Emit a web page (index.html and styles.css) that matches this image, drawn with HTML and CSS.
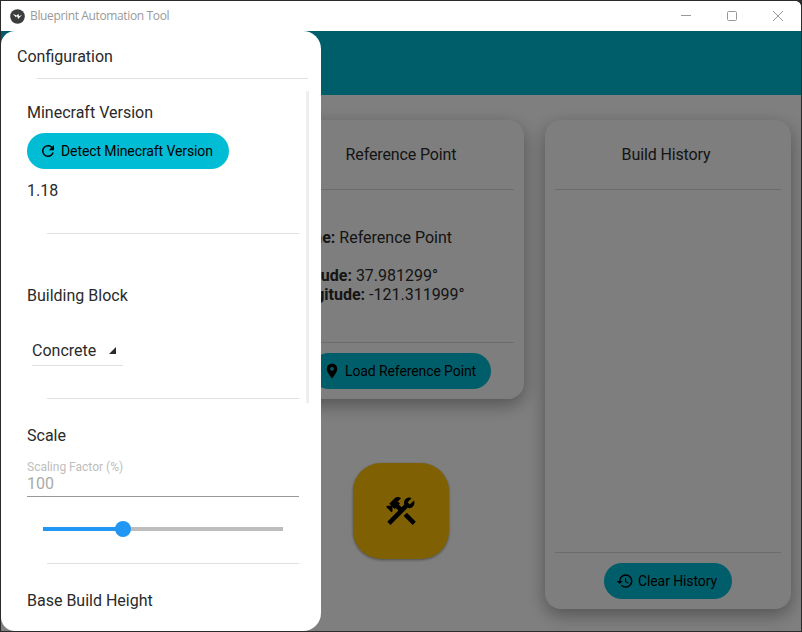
FILE: index.html
```html
<!DOCTYPE html>
<html lang="en">
<head>
<meta charset="utf-8">
<title>Blueprint Automation Tool</title>
<link rel="stylesheet" href="styles.css">
</head>
<body>
<div class="window">
  <header class="titlebar">
    <svg class="app-logo" viewBox="0 0 16 16"><circle cx="8" cy="8" r="7.8" fill="#3c3c3c"/><path d="M3 5L6.2 8.8L7.6 7.4L8.6 10.6L13 6.2L9.6 7.6L9 5L7.2 6.8Z" fill="#fff"/></svg>
    <span class="app-title">Blueprint Automation Tool</span>
    <div class="win-controls">
      <span class="win-btn"><svg viewBox="0 0 12 12"><path d="M1 5.5H11" stroke="#999" fill="none"/></svg></span>
      <span class="win-btn"><svg viewBox="0 0 12 12"><rect x="1.5" y="1.5" width="9" height="9" rx="1" stroke="#999" fill="none"/></svg></span>
      <span class="win-btn"><svg viewBox="0 0 12 12"><path d="M1 1L11 11M11 1L1 11" stroke="#999" fill="none"/></svg></span>
    </div>
  </header>
  <div class="app">
    <div class="toolbar"></div>
    <main class="columns">
      <section class="card tall"></section>
      <div class="middle">
        <section class="card">
          <h2 class="card-title">Reference Point</h2>
          <div class="card-body">
            <p class="info"><b>Name:</b> Reference Point</p>
            <p class="info gap"><b>Latitude:</b> 37.981299°<br><b>Longitude:</b> -121.311999°</p>
          </div>
          <div class="card-foot">
            <button class="pill load">
              <svg class="icon" viewBox="0 0 24 24"><path d="M12,11.5A2.5,2.5 0 0,1 9.5,9A2.5,2.5 0 0,1 12,6.5A2.5,2.5 0 0,1 14.5,9A2.5,2.5 0 0,1 12,11.5M12,2A7,7 0 0,0 5,9C5,14.25 12,22 12,22C12,22 19,14.25 19,9A7,7 0 0,0 12,2Z"/></svg>
              Load Reference Point
            </button>
          </div>
        </section>
        <button class="fab">
          <svg class="fab-icon" viewBox="0 0 24 24"><path d="M13.78 15.3L19.78 21.3L21.89 19.14L15.89 13.14L13.78 15.3M17.5 10.1C17.11 10.1 16.69 10.05 16.36 9.91L4.97 21.25L2.86 19.14L10.27 11.74L8.5 9.96L7.78 10.66L6.33 9.25V12.11L5.63 12.81L2.11 9.25L2.81 8.55H5.58L4.17 7.14L7.78 3.53C8.95 2.36 10.83 2.36 12 3.53L9.89 5.66L11.3 7.06L10.59 7.77L12.38 9.55L14.2 7.66C14.06 7.33 14 6.91 14 6.55C14 4.63 15.56 3.07 17.5 3.07C18.09 3.07 18.61 3.2 19.08 3.47L16.41 6.14L17.91 7.64L20.58 4.97C20.85 5.44 20.97 5.95 20.97 6.55C20.97 8.47 19.42 10.1 17.5 10.1Z"/></svg>
        </button>
      </div>
      <section class="card tall">
        <h2 class="card-title history">Build History</h2>
        <div class="card-body"></div>
        <div class="card-foot">
          <button class="pill">
            <svg class="icon" viewBox="0 0 24 24"><path d="M13.5,8H12V13L16.28,15.54L17,14.33L13.5,12.25V8M13,3A9,9 0 0,0 4,12H1L4.96,16.03L9,12H6A7,7 0 0,1 13,5A7,7 0 0,1 20,12A7,7 0 0,1 13,19C11.07,19 9.32,18.21 8.06,16.94L6.64,18.36C8.27,20 10.5,21 13,21A9,9 0 0,0 22,12A9,9 0 0,0 13,3"/></svg>
            Clear History
          </button>
        </div>
      </section>
    </main>
    <div class="scrim"></div>
    <aside class="drawer">
      <div class="drawer-head">Configuration</div>
      <div class="drawer-scroll">
        <div class="scrollbar"></div>
        <h3 class="heading first">Minecraft Version</h3>
        <button class="pill detect">
          <svg class="icon" viewBox="0 0 24 24"><path d="M17.65,6.35C16.2,4.9 14.21,4 12,4A8,8 0 0,0 4,12A8,8 0 0,0 12,20C15.73,20 18.84,17.45 19.73,14H17.65C16.83,16.33 14.61,18 12,18A6,6 0 0,1 6,12A6,6 0 0,1 12,6C13.66,6 15.14,6.69 16.22,7.78L13,11H20V4L17.65,6.35Z"/></svg>
          Detect Minecraft Version
        </button>
        <div class="value">1.18</div>
        <hr class="rule r-version">
        <h3 class="heading block">Building Block</h3>
        <div class="select"><span>Concrete</span><i class="caret"></i></div>
        <hr class="rule r-block">
        <h3 class="heading">Scale</h3>
        <div class="field">
          <label class="field-label">Scaling Factor (%)</label>
          <div class="field-value">100</div>
        </div>
        <div class="slider">
          <span class="fill"></span><span class="thumb"></span><span class="rest"></span>
        </div>
        <hr class="rule r-scale">
        <h3 class="heading">Base Build Height</h3>
      </div>
    </aside>
  </div>
</div>
</body>
</html>
```
FILE: styles.css
```css
* { box-sizing: border-box; }
html, body { margin: 0; height: 100%; background: #2b2b2b; overflow: hidden; }
body { font-family: Roboto, sans-serif; color: #2a2a2a; }
.window {
  width: 800px; height: 630px; margin: 1px;
  display: flex; flex-direction: column;
  background: #fff; border-top-right-radius: 6px; overflow: hidden;
}
.titlebar {
  height: 30px; flex: none; display: flex; align-items: center;
  padding-left: 9px; background: #fff;
}
.app-logo { width: 15px; height: 15px; flex: none; }
.app-title { margin-left: 5px; font: 12px/14px "Open Sans", sans-serif; color: #999; letter-spacing: -0.03em; margin-top: -1px; }
.win-controls { margin-left: auto; display: flex; }
.win-btn { width: 46px; height: 30px; display: flex; align-items: center; justify-content: center; }
.win-btn svg { width: 12px; height: 12px; }
.app { flex: 1; position: relative; background: #fff; overflow: hidden; display: flex; flex-direction: column; }
.toolbar { height: 64px; flex: none; background: #00bcd4; }
.columns { flex: 1; display: flex; gap: 21px; padding: 25px 10px 22px; }
.card {
  width: 246px; background: #fdfdfd; border-radius: 16px;
  box-shadow: 0 6px 18px rgba(0,0,0,.35);
  display: flex; flex-direction: column; padding: 0 10px;
}
.tall { height: 489px; flex: none; }
.middle { width: 246px; flex: none; display: flex; flex-direction: column; align-items: center; }
.middle .card { height: 279px; flex: none; }
.card-title {
  margin: 0; height: 70px; flex: none; border-bottom: 1px solid #d8d8d8;
  font: 400 16px/70px Roboto, sans-serif; text-align: center; color: #2a2a2a; letter-spacing: -0.13px;
}
.card-title.history { padding-right: 4px; }
.card-body { flex: 1; padding-top: 38px; }
.info { margin: 0; padding-left: 0.5px; font: 16px/19px Roboto, sans-serif; color: #2a2a2a; }
.info.gap { margin-top: 19px; }
.info b { font-weight: 700; }
.card-foot { flex: none; border-top: 1px solid #d8d8d8; padding: 10px 0; display: flex; justify-content: center; }
.pill {
  height: 36px; border: 0; border-radius: 18px; background: #00bcd4; color: #000;
  font: 14px Roboto, sans-serif; letter-spacing: -0.1px; display: inline-flex; align-items: center; gap: 4px;
  padding: 0 15px 0 12px; white-space: nowrap;
}
.icon { width: 18px; height: 18px; flex: none; fill: #000; }
.fab {
  width: 96px; height: 96px; margin-top: 64px; border: 0; border-radius: 28px;
  background: #ffc107; box-shadow: 0 1px 3px rgba(0,0,0,.4);
  display: flex; align-items: center; justify-content: center; padding: 0;
}
.fab-icon { width: 36px; height: 36px; fill: #000; }
.scrim { position: absolute; inset: 0; background: rgba(0,0,0,.5); }
.drawer {
  position: absolute; left: 0; top: 0; bottom: 0; width: 320px;
  background: #fff; border-radius: 14px 18px 18px 14px;
  display: flex; flex-direction: column; overflow: hidden;
}
.drawer-head {
  position: relative; height: 48px; flex: none; padding-left: 16px;
  font-size: 16px; line-height: 52px; color: #2a2a2a;
}
.drawer-head::after {
  content: ""; position: absolute; left: 36px; right: 13px; bottom: 0; height: 1px; background: #e0e0e0;
}
.drawer-scroll { position: relative; flex: 1; margin-top: 12px; padding: 0 22px 0 26px; overflow: hidden; }
.scrollbar { position: absolute; right: 12px; top: 0; width: 3px; height: 312px; background: #eee; }
.heading { margin: 24px 0 0; height: 24px; font: 400 16px/26px Roboto, sans-serif; color: #2a2a2a; }
.heading.first { margin-top: 9px; }
.heading.block { margin-top: 49px; }
.detect { width: 202px; margin-top: 9px; padding: 0 0 0 12px; gap: 4px; display: flex; }
.value { margin-top: 9px; height: 24px; font-size: 16px; line-height: 26px; }
.rule { border: 0; height: 1px; margin: 0 0 0 20px; background: #e0e0e0; }
.r-version { margin-top: 31px; }
.r-block { margin-top: 32px; }
.r-scale { margin-top: 26px; }
.select {
  width: 91px; margin: 31px 0 0 5px; height: 28px; border-bottom: 1px solid #e0e0e0;
  position: relative; font-size: 16px; line-height: 26px;
}
.caret {
  position: absolute; right: 7px; top: 9px; width: 0; height: 0;
  border-left: 7px solid transparent; border-bottom: 7px solid #2a2a2a;
}
.field { margin-top: 12px; border-bottom: 1px solid #999; }
.field-label { display: block; height: 14px; font-size: 12px; line-height: 16px; color: #bdbdbd; }
.field-value { height: 23px; font-size: 16px; line-height: 22px; padding-bottom: 3px; color: #aaa; }
.slider { margin: 24px 0 0 16px; width: 240px; height: 16px; display: flex; align-items: center; }
.fill { width: 80px; height: 4px; background: #2196f3; flex: none; }
.thumb { width: 16px; height: 16px; border-radius: 50%; background: #2196f3; flex: none; margin: 0 -8px; position: relative; }
.rest { flex: 1; height: 4px; background: #bdbdbd; }
```
